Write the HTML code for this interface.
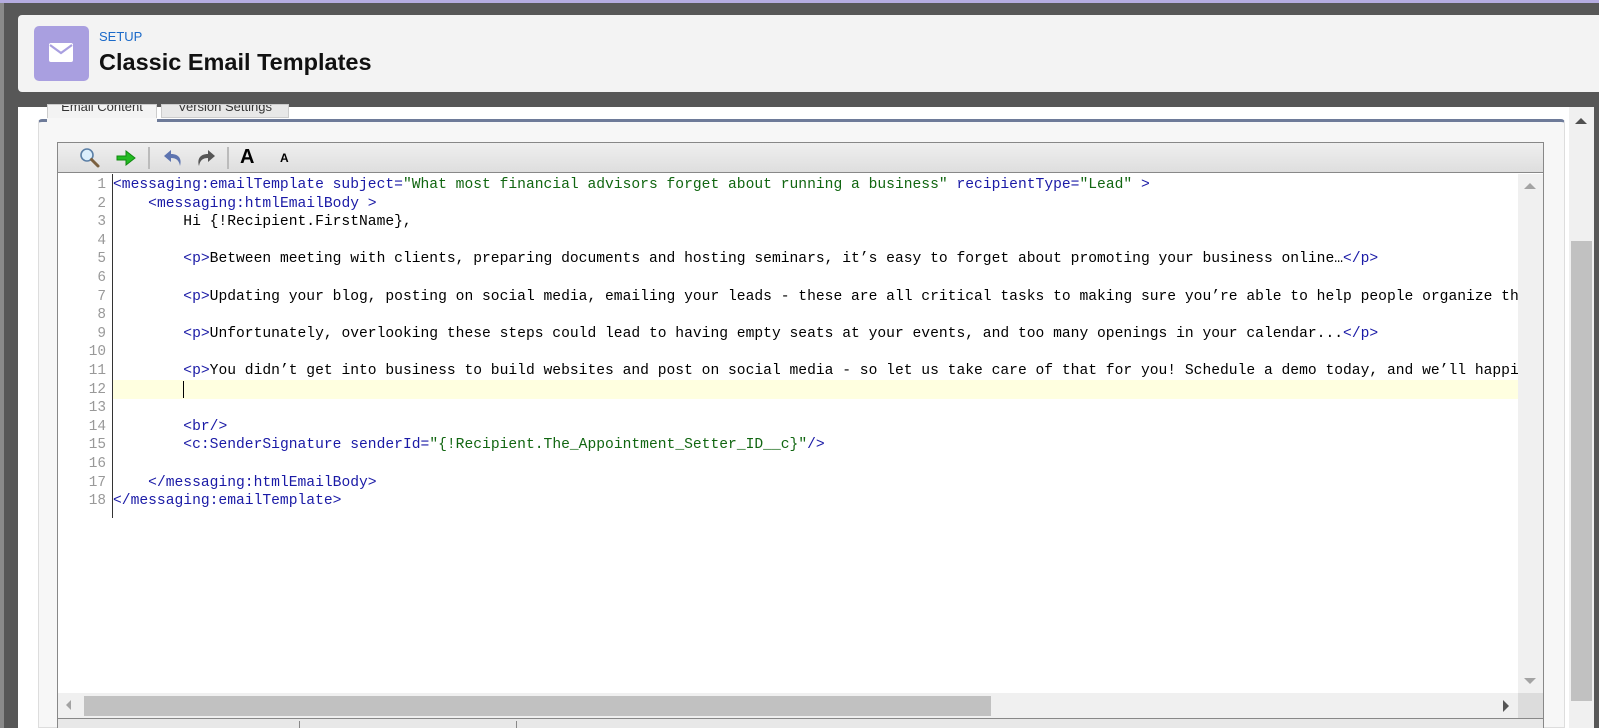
<!DOCTYPE html>
<html><head><meta charset="utf-8"><style>
*{margin:0;padding:0;box-sizing:border-box}
body{width:1599px;height:728px;overflow:hidden;background:#575757;font-family:"Liberation Sans",sans-serif;position:relative}
.a{position:absolute}
.code{font-family:"Liberation Mono",monospace;font-size:14.65px;color:#000}
.code .row{white-space:pre}
.ln{width:48px;text-align:right;color:#999;font-family:"Liberation Mono",monospace;font-size:14.4px}
.t{color:#1a1aa6}.s{color:#116611}
.row{height:18.6px;line-height:18.6px}
</style></head><body>
<div class="a" style="left:0;top:0;width:1599px;height:3px;background:#b5ace0"></div>
<div class="a" style="left:0;top:3px;width:4px;height:725px;background:#8a8a8a"></div>
<!-- header -->
<div class="a" style="left:18px;top:15px;width:1581px;height:77px;background:#f3f3f3;border-radius:4px 0 0 4px"></div>
<div class="a" style="left:34px;top:26px;width:55px;height:55px;background:#a99fe0;border-radius:5px"></div>
<svg class="a" style="left:48px;top:42px" width="26" height="21" viewBox="0 0 26 21"><rect x="1" y="1" width="24" height="19" rx="2" fill="#fff"/><path d="M2 3 L13 11 L24 3" stroke="#a99fe0" stroke-width="2.2" fill="none"/></svg>
<div class="a" style="left:99px;top:29px;font-size:13px;color:#1b6ac9">SETUP</div>
<div class="a" style="left:99px;top:49px;font-size:23.5px;font-weight:bold;color:#111">Classic Email Templates</div>
<!-- content card -->
<div class="a" style="left:18px;top:107px;width:1551px;height:621px;background:#fff"></div>
<!-- tabs -->
<div class="a" style="left:47px;top:104px;width:110px;height:20px;background:#f3f3f3;border:1px solid #ccc;font-size:13px;color:#333;text-align:center;line-height:4px;overflow:hidden">Email Content</div>
<div class="a" style="left:161px;top:104px;width:128px;height:14px;background:#e8e8e8;border:1px solid #ccc;font-size:13px;color:#333;text-align:center;line-height:4px;overflow:hidden">Version Settings</div>
<div class="a" style="left:38px;top:119px;width:1527px;height:609px;background:#f7f7f7;border:1px solid #ddd;border-top:3px solid #6e7b99;border-radius:4px 4px 0 0"></div>
<div class="a" style="left:47px;top:118px;width:110px;height:5px;background:#f7f7f7"></div>
<!-- editor -->
<div class="a" style="left:57px;top:142px;width:1487px;height:586px;background:#fff;border:1px solid #888"></div>
<div class="a" style="left:58px;top:143px;width:1485px;height:30px;background:linear-gradient(#efefef,#dedede);border-bottom:1px solid #888"></div>
<!-- toolbar icons -->
<svg class="a" style="left:79px;top:147px" width="22" height="22" viewBox="0 0 22 22"><circle cx="8" cy="8" r="6" fill="#dbeefc" stroke="#5b7fa6" stroke-width="1.6"/><path d="M12.5 12.5 L19 19" stroke="#7a6040" stroke-width="3" stroke-linecap="round"/></svg>
<svg class="a" style="left:115px;top:149px" width="22" height="18" viewBox="0 0 22 18"><path d="M2 7 H11 V2 L20 9 L11 16 V11 H2 Z" fill="#22bb22" stroke="#118811" stroke-width="1"/></svg>
<div class="a" style="left:148px;top:147px;width:2px;height:22px;background:#bbb"></div>
<svg class="a" style="left:162px;top:147px" width="22" height="22" viewBox="0 0 22 22"><path d="M9 3 L2 9 L9 15 V11 C14 11 17 13 18 19 C20 12 17 7 9 7 Z" fill="#5d74b0"/></svg>
<svg class="a" style="left:195px;top:147px" width="22" height="22" viewBox="0 0 22 22"><path d="M13 3 L20 9 L13 15 V11 C8 11 5 13 4 19 C2 12 5 7 13 7 Z" fill="#555"/></svg>
<div class="a" style="left:227px;top:147px;width:2px;height:22px;background:#bbb"></div>
<div class="a" style="left:240px;top:147px;font-size:20px;font-weight:bold;color:#000;line-height:20px">A</div>
<div class="a" style="left:280px;top:152px;font-size:12px;font-weight:bold;color:#000;line-height:12px">A</div>
<!-- gutter line -->
<div class="a" style="left:112px;top:174px;width:1px;height:344px;background:#333"></div>
<!-- active line -->
<div class="a" style="left:113px;top:380px;width:1405px;height:19px;background:#ffffe0"></div>
<div class="a" style="left:183px;top:381px;width:1px;height:17px;background:#000"></div>
<div class="a" style="left:58px;top:176px;width:1460px;height:345px;overflow:hidden">
<div class="a" style="left:0;top:0;width:48px">
<div class="row ln">1</div><div class="row ln">2</div><div class="row ln">3</div><div class="row ln">4</div><div class="row ln">5</div><div class="row ln">6</div><div class="row ln">7</div><div class="row ln">8</div><div class="row ln">9</div><div class="row ln">10</div><div class="row ln">11</div><div class="row ln">12</div><div class="row ln">13</div><div class="row ln">14</div><div class="row ln">15</div><div class="row ln">16</div><div class="row ln">17</div><div class="row ln">18</div>
</div>
<div class="a code" style="left:55px;top:0"><div class="row"><span class="t">&lt;messaging:emailTemplate subject=</span><span class="s">"What most financial advisors forget about running a business"</span><span class="t"> recipientType=</span><span class="s">"Lead"</span><span class="t"> &gt;</span></div><div class="row">    <span class="t">&lt;messaging:htmlEmailBody &gt;</span></div><div class="row">        Hi {!Recipient.FirstName},</div><div class="row"> </div><div class="row">        <span class="t">&lt;p&gt;</span>Between meeting with clients, preparing documents and hosting seminars, it’s easy to forget about promoting your business online…<span class="t">&lt;/p&gt;</span></div><div class="row"> </div><div class="row">        <span class="t">&lt;p&gt;</span>Updating your blog, posting on social media, emailing your leads - these are all critical tasks to making sure you’re able to help people organize their finances.</div><div class="row"> </div><div class="row">        <span class="t">&lt;p&gt;</span>Unfortunately, overlooking these steps could lead to having empty seats at your events, and too many openings in your calendar...<span class="t">&lt;/p&gt;</span></div><div class="row"> </div><div class="row">        <span class="t">&lt;p&gt;</span>You didn’t get into business to build websites and post on social media - so let us take care of that for you! Schedule a demo today, and we’ll happily show you.</div><div class="row"> </div><div class="row"> </div><div class="row">        <span class="t">&lt;br/&gt;</span></div><div class="row">        <span class="t">&lt;c:SenderSignature senderId=</span><span class="s">"{!Recipient.The_Appointment_Setter_ID__c}"</span><span class="t">/&gt;</span></div><div class="row"> </div><div class="row">    <span class="t">&lt;/messaging:htmlEmailBody&gt;</span></div><div class="row"><span class="t">&lt;/messaging:emailTemplate&gt;</span></div></div>
</div>
<!-- editor vertical scrollbar -->
<div class="a" style="left:1518px;top:174px;width:25px;height:519px;background:#f0f0f0"></div>
<div class="a" style="left:1524px;top:183px;width:0;height:0;border-left:6px solid transparent;border-right:6px solid transparent;border-bottom:6px solid #a3a3a3"></div>
<div class="a" style="left:1524px;top:678px;width:0;height:0;border-left:6px solid transparent;border-right:6px solid transparent;border-top:6px solid #a3a3a3"></div>
<!-- horizontal scrollbar -->
<div class="a" style="left:58px;top:693px;width:1460px;height:25px;background:#f0f0f0"></div>
<div class="a" style="left:84px;top:696px;width:907px;height:20px;background:#c1c1c1"></div>
<div class="a" style="left:66px;top:700px;width:0;height:0;border-top:5px solid transparent;border-bottom:5px solid transparent;border-right:5px solid #a3a3a3"></div>
<div class="a" style="left:1503px;top:700px;width:0;height:0;border-top:6px solid transparent;border-bottom:6px solid transparent;border-left:6px solid #555"></div>
<div class="a" style="left:1518px;top:693px;width:25px;height:25px;background:#dcdcdc"></div>
<!-- status bar -->
<div class="a" style="left:58px;top:718px;width:1485px;height:10px;background:#e8e8e8;border-top:1px solid #888"></div>
<div class="a" style="left:299px;top:721px;width:1px;height:7px;background:#888"></div>
<div class="a" style="left:516px;top:721px;width:1px;height:7px;background:#888"></div>
<!-- page scrollbar -->
<div class="a" style="left:1569px;top:107px;width:25px;height:621px;background:#f0f0f0"></div>
<div class="a" style="left:1575px;top:118px;width:0;height:0;border-left:6px solid transparent;border-right:6px solid transparent;border-bottom:6px solid #505050"></div>
<div class="a" style="left:1571px;top:241px;width:21px;height:460px;background:#c1c1c1"></div>
</body></html>
